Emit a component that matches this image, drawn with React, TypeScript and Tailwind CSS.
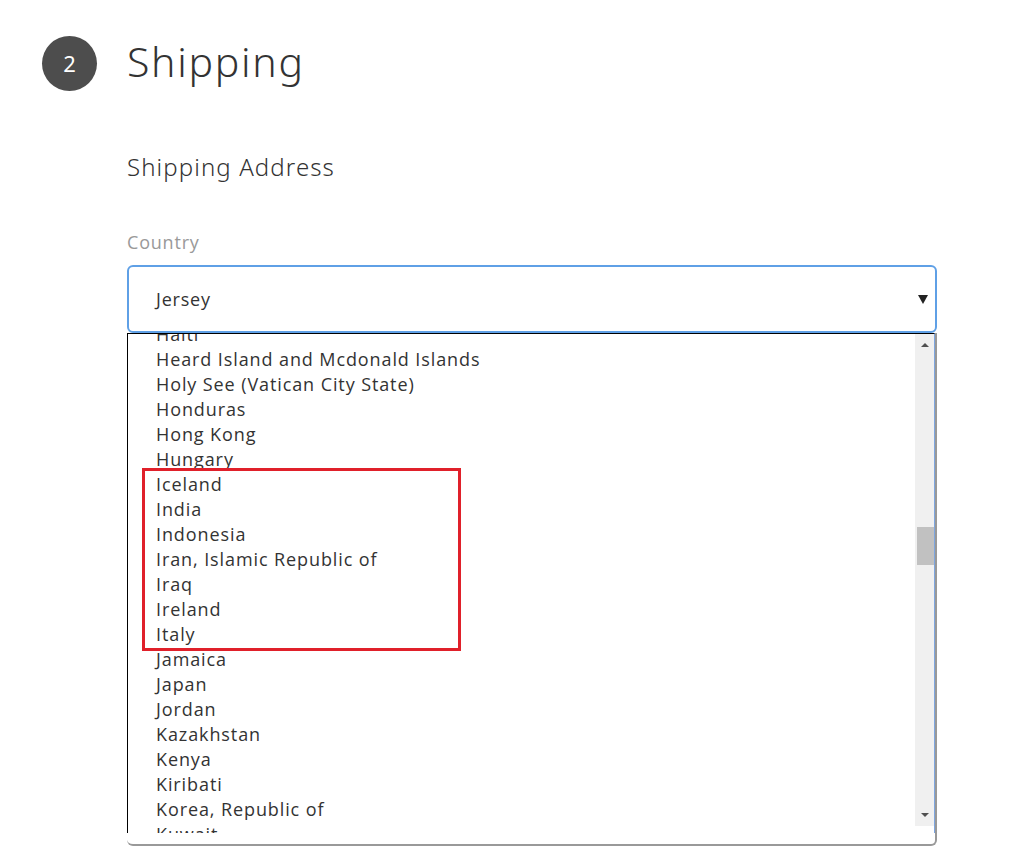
const countries = [
  'Haiti',
  'Heard Island and Mcdonald Islands',
  'Holy See (Vatican City State)',
  'Honduras',
  'Hong Kong',
  'Hungary',
  'Iceland',
  'India',
  'Indonesia',
  'Iran, Islamic Republic of',
  'Iraq',
  'Ireland',
  'Italy',
  'Jamaica',
  'Japan',
  'Jordan',
  'Kazakhstan',
  'Kenya',
  'Kiribati',
  'Korea, Republic of',
  'Kuwait',
]

const StepBadge = ({ n }: { n: number }) => (
  <div className="w-[55px] h-[55px] rounded-full bg-[#4d4d4d] text-white flex items-center justify-center text-[22px] font-['Noto_Sans',sans-serif]">
    {n}
  </div>
)

const Scrollbar = () => (
  <div className="w-[19px] h-[492px] bg-[#f0f0f0] flex flex-col items-center justify-between py-[9px] relative">
    <span className="w-0 h-0 border-l-[4px] border-r-[4px] border-b-[4px] border-l-transparent border-r-transparent border-b-[#505050]" />
    <div className="absolute left-[2px] top-[193px] w-[17px] h-[38px] bg-[#c1c1c1]" />
    <span className="w-0 h-0 border-l-[4px] border-r-[4px] border-t-[4px] border-l-transparent border-r-transparent border-t-[#505050]" />
  </div>
)

export default function App() {
  return (
    <div className="w-[1032px] h-[866px] bg-white relative overflow-hidden font-['Noto_Sans',sans-serif]">
      <div className="flex items-center gap-[30px] pl-[42px] pt-[36px]">
        <StepBadge n={2} />
        <h1 className="text-[41px] font-light text-[#333] tracking-[1.7px] leading-none -mt-[4px]">Shipping</h1>
      </div>

      <div className="pl-[127px] pr-[95px]">
        <h2 className="mt-[58px] text-[24px] font-light text-[#333] tracking-[1.1px]">Shipping Address</h2>
        <label className="block mt-[44px] text-[18px] text-[#999] font-['Open_Sans',sans-serif] tracking-[0.8px]">Country</label>

        <div className="mt-[9px] h-[68px] rounded-[6px] border-2 border-[#5fa0e6] flex items-center justify-between pl-[27px] pr-[7px] font-['Open_Sans',sans-serif] text-[18px] tracking-[0.8px] text-[#333]">
          <span>Jersey</span>
          <span className="w-0 h-0 border-l-[5px] border-r-[5px] border-t-[9px] border-l-transparent border-r-transparent border-t-[#222]" />
        </div>

        <div className="h-[513px] rounded-b-[6px] border-b-2 border-r-2 border-[#999]">
          <div className="h-[500px] flex items-start border-l border-t border-black border-r border-r-[#7ea6e0] font-['Open_Sans',sans-serif] text-[18px] tracking-[0.9px] text-[#333]">
            <div className="flex-1 h-full overflow-hidden">
              <ul className="-mt-[12px] pl-[28px]">
                {countries.map((c) => (
                  <li key={c} className="h-[25px] leading-[25px]">{c}</li>
                ))}
              </ul>
            </div>
            <Scrollbar />
          </div>
        </div>
      </div>

      <div className="absolute left-[142px] top-[468px] w-[319px] h-[183px] border-[3px] border-[#e0202a]" />
    </div>
  )
}
